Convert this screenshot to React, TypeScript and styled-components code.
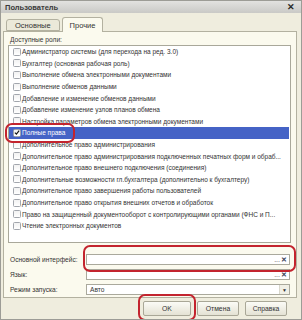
import styled, { createGlobalStyle } from 'styled-components';

const GlobalStyle = createGlobalStyle`
     html, body {
          margin: 0;
          padding: 0;
          background: #ffffff;
     }

     body {
          font-family: 'Liberation Sans', Arial, sans-serif;
     }
`;

const Window = styled.div`
     position: relative;
     width: 302px;
     height: 320px;
     box-sizing: border-box;
     display: flex;
     flex-direction: column;
     background: #efedde;
     border: 1px solid #9c9c96;
     overflow: hidden;
`;

const TitleBar = styled.div`
     height: 12px;
     flex: none;
     display: flex;
     align-items: center;
     justify-content: space-between;
     padding: 0 6px 0 4px;
     background: linear-gradient(#e2e2e0, #c9c9c6);
     color: #3a3a3a;
     font-size: 7.5px;
     font-weight: 700;

     .close {
          font-size: 9px;
          color: #2a2a2a;
     }
`;

const Body = styled.div`
     flex: 1;
     display: flex;
     flex-direction: column;
     padding: 3px 4px 0 2px;
`;

const Tabs = styled.div`
     height: 15px;
     display: flex;
     align-items: flex-end;
     gap: 2px;
     padding-left: 3px;
`;

const Tab = styled.div<{ $active?: boolean }>`
     height: ${(p) => (p.$active ? '15px' : '12px')};
     box-sizing: border-box;
     padding: 0 ${(p) => (p.$active ? '7px' : '8px')};
     display: flex;
     align-items: center;
     font-size: 7.5px;
     color: #333;
     background: ${(p) => (p.$active ? '#fbfaee' : '#ebe9d9')};
     border: 1px solid #b3b1a0;
     border-bottom: ${(p) => (p.$active ? 'none' : '1px solid #b3b1a0')};
     border-radius: 3px 3px 0 0;
     margin-bottom: ${(p) => (p.$active ? '-1px' : '0')};
     position: relative;
     z-index: ${(p) => (p.$active ? 1 : 0)};
`;

const Panel = styled.div`
     height: 267px;
     box-sizing: border-box;
     display: flex;
     flex-direction: column;
     background: #fbfaee;
     border: 1px solid #b3b1a0;
     padding: 2px 5px 0 4px;
`;

const Caption = styled.div`
     height: 10px;
     display: flex;
     align-items: center;
     padding-left: 2px;
     font-size: 6.6px;
     color: #333;
`;

const ListBox = styled.div`
     margin-top: 1px;
     height: 198px;
     box-sizing: border-box;
     background: #ffffff;
     border: 1px solid #a9a89a;
     padding: 0 1px 0 0;
     display: flex;
     flex-direction: column;
`;

const Row = styled.div<{ $selected?: boolean }>`
     height: 11.6px;
     display: flex;
     align-items: center;
     gap: 1px;
     padding-left: 4px;
     font-size: 6.5px;
     white-space: nowrap;
     overflow: hidden;
     color: ${(p) => (p.$selected ? '#ffffff' : '#333')};
     background: ${(p) => (p.$selected ? '#4563c6' : 'transparent')};
`;

const Box = styled.span`
     width: 8px;
     height: 8px;
     flex: none;
     box-sizing: border-box;
     border: 1px solid #a2a6ad;
     border-radius: 1.5px;
     background: linear-gradient(#f2f2f2, #ffffff);
     display: flex;
     align-items: center;
     justify-content: center;
`;

const Form = styled.div`
     margin-top: 10px;
     display: flex;
     flex-direction: column;
     gap: 2px;
`;

const FieldRow = styled.div`
     height: 13px;
     display: flex;
     align-items: center;

     label {
          width: 76px;
          padding-left: 2px;
          font-size: 6.6px;
          color: #333;
     }
`;

const Field = styled.div`
     width: 204px;
     height: 11px;
     box-sizing: border-box;
     background: #ffffff;
     border: 1px solid #aaa99c;
     display: flex;
     align-items: center;
     justify-content: space-between;
     padding-left: 3px;
     font-size: 6.6px;
     color: #333;
`;

const FieldButtons = styled.div`
     display: flex;
     align-items: center;
     gap: 1px;
     height: 100%;
     font-size: 7px;
     color: #555;

     .x {
          font-weight: 700;
          color: #40465a;
          padding-right: 2px;
     }
`;

const DropButton = styled.div`
     width: 9px;
     height: 100%;
     display: flex;
     align-items: center;
     justify-content: center;
     border-left: 1px solid #d8d7cc;
     background: #f1f0e6;
     font-size: 5px;
     color: #333;
`;

const ButtonBar = styled.div`
     display: flex;
     justify-content: flex-end;
     gap: 6px;
     padding: 3px 10px 0 0;
`;

const Button = styled.button<{ $w: number }>`
     width: ${(p) => p.$w}px;
     height: 15px;
     padding: 0;
     font-family: 'Liberation Sans', Arial, sans-serif;
     font-size: 6.8px;
     color: #333;
     background: linear-gradient(#fbfbf6, #e4e2d4);
     border: 1px solid #a9a797;
     border-radius: 2px;
`;

const Mark = styled.div<{ $x: number; $y: number; $w: number; $h: number }>`
     position: absolute;
     left: ${(p) => p.$x}px;
     top: ${(p) => p.$y}px;
     width: ${(p) => p.$w}px;
     height: ${(p) => p.$h}px;
     box-sizing: border-box;
     border: 2.5px solid #c3242e;
     border-radius: 7px;
     pointer-events: none;
`;

const roles = [
     'Администратор системы (для перехода на ред. 3.0)',
     'Бухгалтер (основная рабочая роль)',
     'Выполнение обмена электронными документами',
     'Выполнение обменов данными',
     'Добавление и изменение обменов данными',
     'Добавление изменение узлов планов обмена',
     'Настройка параметров обмена электронными документами',
     'Полные права',
     'Дополнительное право администрирования',
     'Дополнительное право администрирования подключенных печатных форм и обраб...',
     'Дополнительное право внешнего подключения (соединения)',
     'Дополнительные возможности гл.бухгалтера (дополнительно к бухгалтеру)',
     'Дополнительное право завершения работы пользователей',
     'Дополнительное право открытия внешних отчетов и обработок',
     'Право на защищенный документооборот с контролирующими органами (ФНС и П...',
     'Чтение электронных документов',
];

const Check = () => (
     <svg width='7' height='7' viewBox='0 0 7 7'>
          <path d='M1 3.6 L2.8 5.4 L6 1.2' fill='none' stroke='#1a1a1a' strokeWidth='1.4' />
     </svg>
);

const App = () => {
     return (
          <Window>
               <GlobalStyle />
               <TitleBar>
                    <span>Пользователь</span>
                    <span className='close'>✕</span>
               </TitleBar>

               <Body>
                    <Tabs>
                         <Tab>Основные</Tab>
                         <Tab $active>Прочие</Tab>
                    </Tabs>

                    <Panel>
                         <Caption>Доступные роли:</Caption>
                         <ListBox>
                              {roles.map((role) => {
                                   const selected = role === 'Полные права';
                                   return (
                                        <Row key={role} $selected={selected}>
                                             <Box>{selected && <Check />}</Box>
                                             {role}
                                        </Row>
                                   );
                              })}
                         </ListBox>

                         <Form>
                              <FieldRow>
                                   <label>Основной интерфейс:</label>
                                   <Field>
                                        <span></span>
                                        <FieldButtons>
                                             <span>...</span>
                                             <span className='x'>✕</span>
                                        </FieldButtons>
                                   </Field>
                              </FieldRow>
                              <FieldRow>
                                   <label>Язык:</label>
                                   <Field>
                                        <span></span>
                                        <FieldButtons>
                                             <span>...</span>
                                             <span className='x'>✕</span>
                                        </FieldButtons>
                                   </Field>
                              </FieldRow>
                              <FieldRow>
                                   <label>Режим запуска:</label>
                                   <Field>
                                        <span>Авто</span>
                                        <DropButton>▼</DropButton>
                                   </Field>
                              </FieldRow>
                         </Form>
                    </Panel>

                    <ButtonBar>
                         <Button $w={48}>OK</Button>
                         <Button $w={42}>Отмена</Button>
                         <Button $w={42}>Справка</Button>
                    </ButtonBar>
               </Body>

               {/* red annotation marks */}
               <Mark $x={4} $y={122} $w={70} $h={20} />
               <Mark $x={82} $y={244} $w={213} $h={27} />
               <Mark $x={137} $y={293} $w={58} $h={27} />
          </Window>
     );
};

export default App;
